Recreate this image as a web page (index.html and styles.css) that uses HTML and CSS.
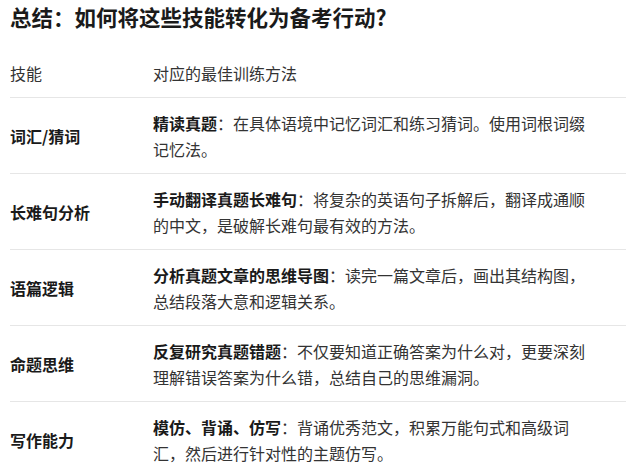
FILE: index.html
```html
<!DOCTYPE html>
<html lang="zh-CN">
<head>
<meta charset="utf-8">
<title>总结</title>
<link rel="stylesheet" href="styles.css">
</head>
<body>
<div class="page">
  <h1 class="title">总结：如何将这些技能转化为备考行动?</h1>
  <div class="table">
    <div class="row head">
      <div class="skill">技能</div>
      <div class="method">对应的最佳训练方法</div>
    </div>
    <div class="row">
      <div class="skill">词汇/猜词</div>
      <div class="method"><strong>精读真题</strong>：在具体语境中记忆词汇和练习猜词。使用词根词缀记忆法。</div>
    </div>
    <div class="row">
      <div class="skill">长难句分析</div>
      <div class="method"><strong>手动翻译真题长难句</strong>：将复杂的英语句子拆解后，翻译成通顺的中文，是破解长难句最有效的方法。</div>
    </div>
    <div class="row">
      <div class="skill">语篇逻辑</div>
      <div class="method"><strong>分析真题文章的思维导图</strong>：读完一篇文章后，画出其结构图，总结段落大意和逻辑关系。</div>
    </div>
    <div class="row">
      <div class="skill">命题思维</div>
      <div class="method"><strong>反复研究真题错题</strong>：不仅要知道正确答案为什么对，更要深刻理解错误答案为什么错，总结自己的思维漏洞。</div>
    </div>
    <div class="row">
      <div class="skill">写作能力</div>
      <div class="method"><strong>模仿、背诵、仿写</strong>：背诵优秀范文，积累万能句式和高级词汇，然后进行针对性的主题仿写。</div>
    </div>
  </div>
</div>
</body>
</html>
```

FILE: styles.css
```css
html, body {
  margin: 0;
  padding: 0;
  background: #ffffff;
}

body {
  font-family: "Noto Sans CJK SC", "Noto Sans", "Liberation Sans", sans-serif;
  color: #333333;
}

.page {
  padding: 1px 14px 0 10px;
}

.title {
  margin: 0 0 15px 0;
  font-size: 21.5px;
  line-height: 32px;
  font-weight: 700;
  color: #1a1a1a;
}

.table {
  display: flex;
  flex-direction: column;
}

.row {
  display: grid;
  grid-template-columns: 143px 1fr;
  align-items: center;
  border-top: 1px solid #e6e6e6;
  padding: 12px 0 11px 0;
  font-size: 16px;
  line-height: 26px;
}

.row.head {
  border-top: none;
}

.skill {
  font-weight: 700;
  color: #1a1a1a;
}

.head .skill {
  font-weight: 400;
  color: #333333;
}

.method {
  padding-right: 35px;
  color: #333333;
}

.method strong {
  font-weight: 700;
  color: #1a1a1a;
}
```
